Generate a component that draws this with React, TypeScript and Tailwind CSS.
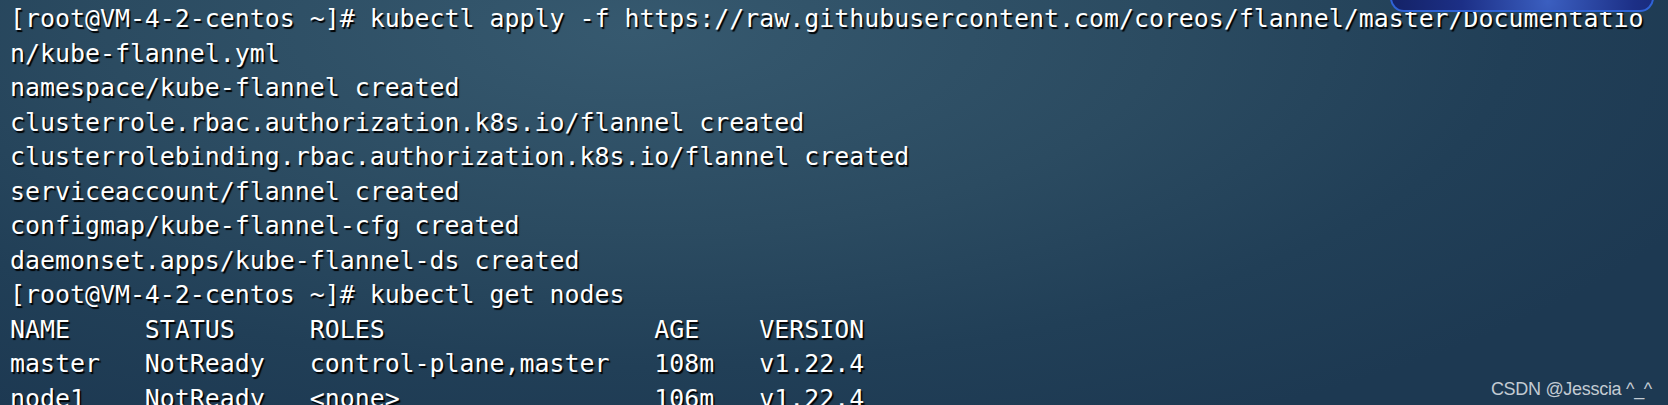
const lines = [
  "[root@VM-4-2-centos ~]# kubectl apply -f https://raw.githubusercontent.com/coreos/flannel/master/Documentatio",
  "n/kube-flannel.yml",
  "namespace/kube-flannel created",
  "clusterrole.rbac.authorization.k8s.io/flannel created",
  "clusterrolebinding.rbac.authorization.k8s.io/flannel created",
  "serviceaccount/flannel created",
  "configmap/kube-flannel-cfg created",
  "daemonset.apps/kube-flannel-ds created",
  "[root@VM-4-2-centos ~]# kubectl get nodes",
  "NAME     STATUS     ROLES                  AGE    VERSION",
  "master   NotReady   control-plane,master   108m   v1.22.4",
  "node1    NotReady   <none>                 106m   v1.22.4",
];

export default function App() {
  return (
    <div className="relative h-[405px] w-[1668px] overflow-hidden bg-[radial-gradient(ellipse_70%_110%_at_38%_8%,#36596f_0%,#2b4b61_45%,#213f57_75%,#1d3952_100%)]">
      {/* corner of a starry picture peeking in at the top */}
      <div className="absolute left-[1390px] top-[-20px] h-[32px] w-[264px] rounded-b-[14px] border-2 border-[#2f63d6] bg-[radial-gradient(circle_at_60%_70%,#3b5fc0_0%,#1c2f86_55%,#142266_100%)]" />
      <div className="pl-[10px] pt-[2px] font-['DejaVu_Sans_Mono',monospace] text-[24.9px] leading-[34.5px] text-white [text-shadow:1.5px_1.5px_1px_#000]">
        {lines.map((l, i) => (
          <div key={i} className="whitespace-pre">{l}</div>
        ))}
      </div>
      <div className="absolute bottom-[2px] right-[16px] font-['Liberation_Sans',Arial,sans-serif] text-[18px] tracking-[-0.3px] text-[#c3cbd3]">
        CSDN @Jesscia ^_^
      </div>
    </div>
  );
}
